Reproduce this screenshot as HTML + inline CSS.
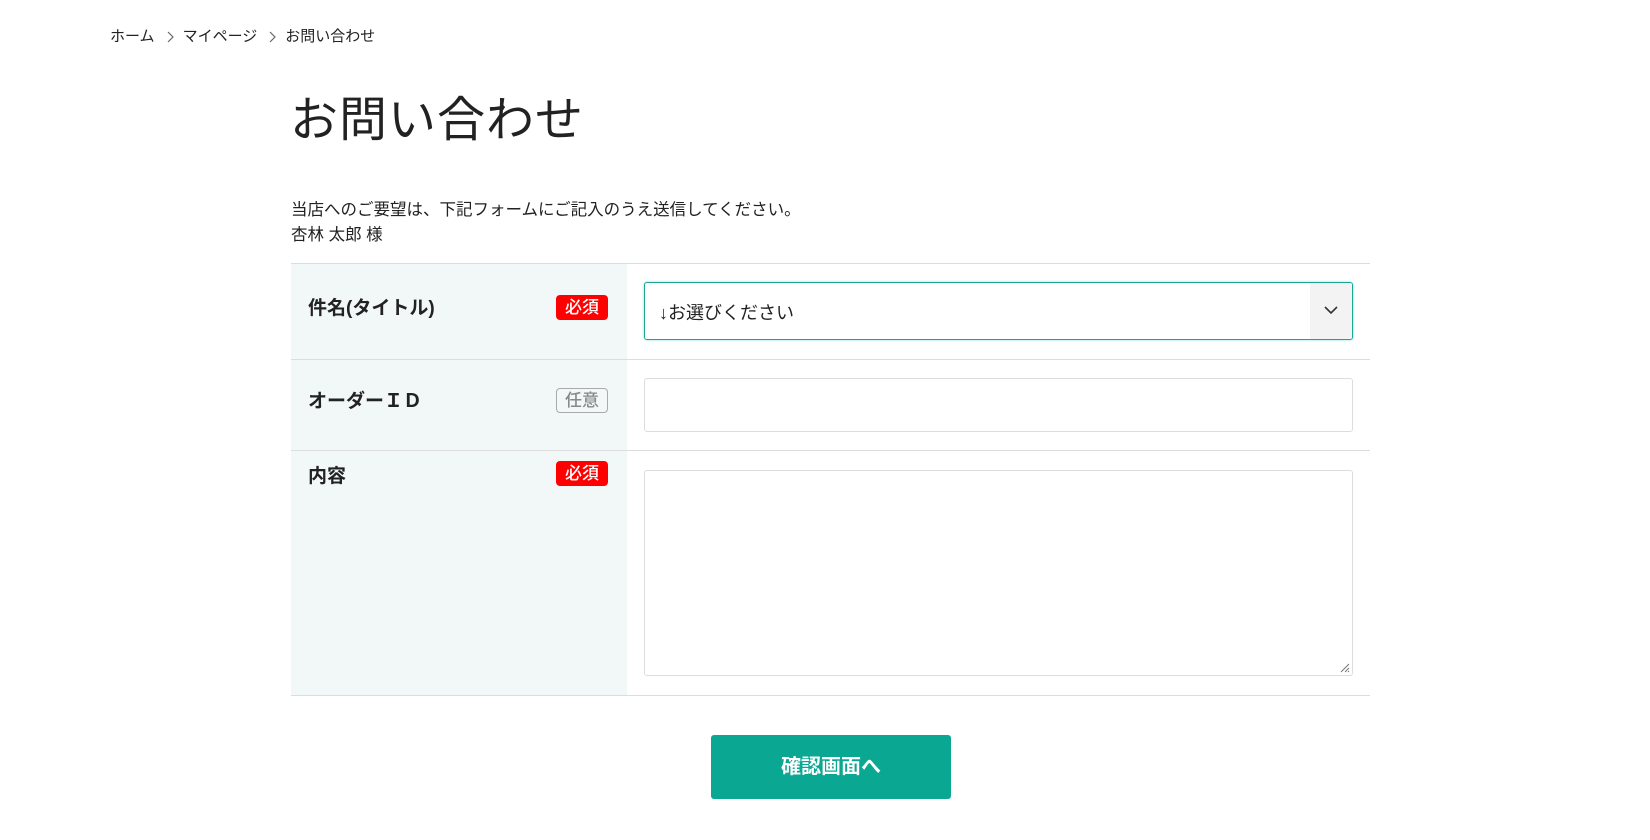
<!DOCTYPE html>
<html><head><meta charset="utf-8"><style>
body{margin:0;background:#fff;font-family:"Liberation Sans","Noto Sans CJK JP",sans-serif;color:#222;width:1650px;height:840px;position:relative;overflow:hidden}
.a{position:absolute}
.bc{left:110px;top:25px;font-size:15px}
.bc svg{margin:0 9px 0 11px;vertical-align:middle}
h1{position:absolute;left:290px;top:80px;margin:0;font-weight:400;font-size:48px;letter-spacing:1px}
.t{left:291px;font-size:16.5px}
.tbl{left:291px;top:263px;width:1079px;height:432px;border-top:1px solid #ddd}
.lab{position:absolute;left:0;width:336px;background:#f1f8f7}
.line{position:absolute;left:0;width:1079px;height:1px;background:#ddd}
.lt{position:absolute;left:17px;font-size:19px;font-weight:bold}
.bd{position:absolute;left:265px;width:52px;height:25px;border-radius:4px;font-size:17px;text-align:center;line-height:25px;font-weight:500}
.req{background:#f00;color:#fff}
.opt{border:1px solid #aaa;color:#888;height:23px;width:50px;line-height:23px}
.box{position:absolute;left:353px;width:707px;border:1px solid #ddd;border-radius:3px;background:#fff}
.btn{left:711px;top:735px;width:240px;height:64px;background:#0aa793;color:#fff;font-size:20px;font-weight:bold;text-align:center;line-height:64px;border-radius:3px}
</style></head><body>
<div class="a bc">ホーム<svg width="8" height="12"><path d="M2 1l5 5-5 5" fill="none" stroke="#666" stroke-width="1.2"/></svg>マイページ<svg width="8" height="12"><path d="M2 1l5 5-5 5" fill="none" stroke="#666" stroke-width="1.2"/></svg>お問い合わせ</div>
<h1>お問い合わせ</h1>
<div class="a t" style="top:196px">当店へのご要望は、下記フォームにご記入のうえ送信してください。</div>
<div class="a t" style="top:221px">杏林 太郎 様</div>
<div class="a tbl">
 <div class="lab" style="top:0;height:432px"></div>
 <div class="line" style="top:95px"></div>
 <div class="line" style="top:186px"></div>
 <div class="line" style="top:431px"></div>
 <div class="lt" style="top:29px">件名(タイトル)</div>
 <div class="bd req" style="top:31px">必須</div>
 <div class="lt" style="top:122px">オーダーＩＤ</div>
 <div class="bd opt" style="top:124px">任意</div>
 <div class="lt" style="top:197px">内容</div>
 <div class="bd req" style="top:197px">必須</div>
 <div class="box" style="top:18px;height:56px;border:1.5px solid #1aa793;box-shadow:0 0 2px #7dd;overflow:hidden">
  <div style="position:absolute;left:14px;top:16px;font-size:18px">↓お選びください</div>
  <div style="position:absolute;right:0;top:0;width:42px;height:56px;background:#f3f3f3"></div>
  <svg style="position:absolute;right:13px;top:22px" width="16" height="10"><path d="M2 2l6 6 6-6" fill="none" stroke="#333" stroke-width="1.6"/></svg>
 </div>
 <div class="box" style="top:114px;height:52px"></div>
 <div class="box" style="top:206px;height:204px">
  <svg style="position:absolute;right:2px;bottom:2px" width="12" height="12"><path d="M11 3L3 11M11 7L7 11M11 10L10 11" stroke="#777" stroke-width="1"/></svg>
 </div>
</div>
<div class="a btn">確認画面へ</div>
</body></html>
